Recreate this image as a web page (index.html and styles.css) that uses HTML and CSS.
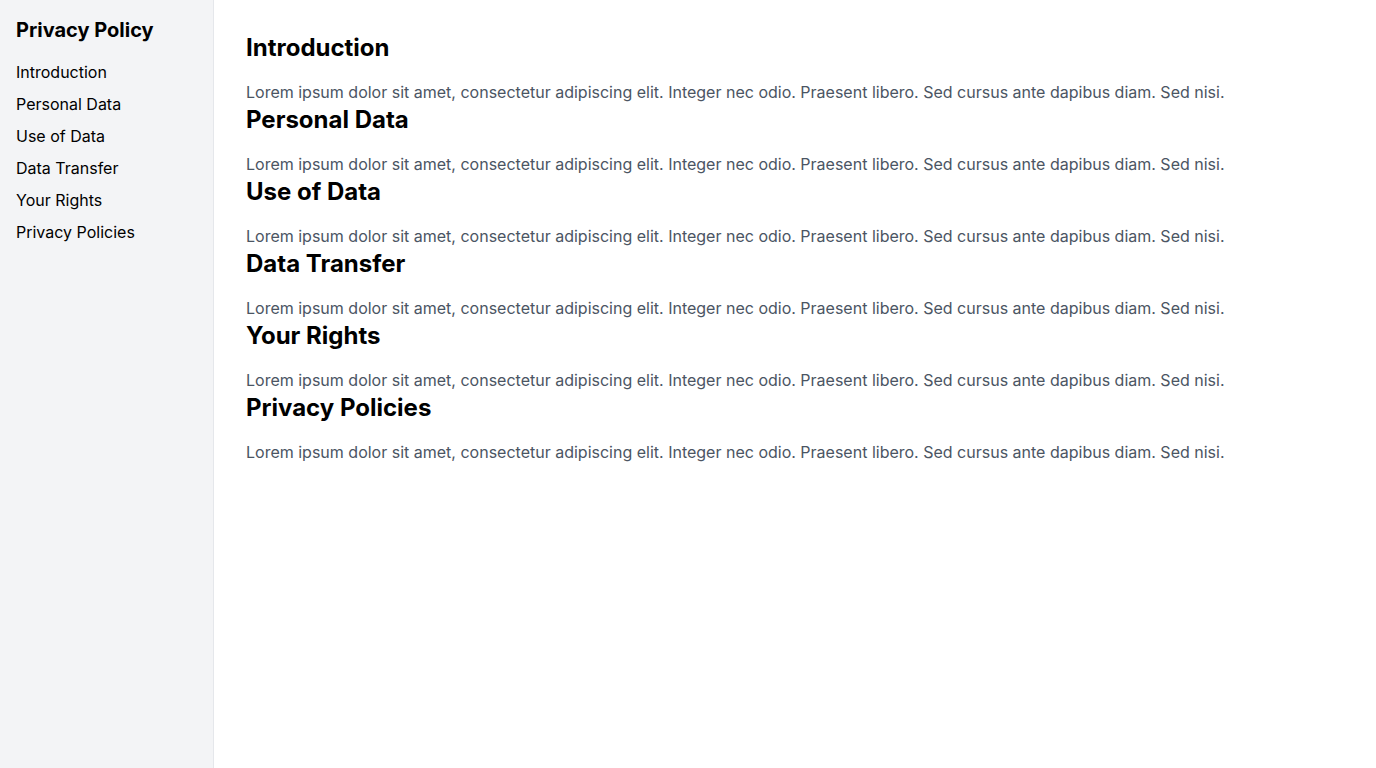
FILE: index.html
```html
<!DOCTYPE html>
<html lang="en">
<head>
<meta charset="utf-8">
<title>Privacy Policy</title>
<link rel="stylesheet" href="styles.css">
</head>
<body>
<div class="layout">
  <aside class="sidebar">
    <h1 class="sidebar-title">Privacy Policy</h1>
    <nav class="nav">
      <a href="#introduction">Introduction</a>
      <a href="#personal-data">Personal Data</a>
      <a href="#use-of-data">Use of Data</a>
      <a href="#data-transfer">Data Transfer</a>
      <a href="#your-rights">Your Rights</a>
      <a href="#privacy-policies">Privacy Policies</a>
    </nav>
  </aside>
  <main class="content">
    <section id="introduction">
      <h2>Introduction</h2>
      <p>Lorem ipsum dolor sit amet, consectetur adipiscing elit. Integer nec odio. Praesent libero. Sed cursus ante dapibus diam. Sed nisi.</p>
    </section>
    <section id="personal-data">
      <h2>Personal Data</h2>
      <p>Lorem ipsum dolor sit amet, consectetur adipiscing elit. Integer nec odio. Praesent libero. Sed cursus ante dapibus diam. Sed nisi.</p>
    </section>
    <section id="use-of-data">
      <h2>Use of Data</h2>
      <p>Lorem ipsum dolor sit amet, consectetur adipiscing elit. Integer nec odio. Praesent libero. Sed cursus ante dapibus diam. Sed nisi.</p>
    </section>
    <section id="data-transfer">
      <h2>Data Transfer</h2>
      <p>Lorem ipsum dolor sit amet, consectetur adipiscing elit. Integer nec odio. Praesent libero. Sed cursus ante dapibus diam. Sed nisi.</p>
    </section>
    <section id="your-rights">
      <h2>Your Rights</h2>
      <p>Lorem ipsum dolor sit amet, consectetur adipiscing elit. Integer nec odio. Praesent libero. Sed cursus ante dapibus diam. Sed nisi.</p>
    </section>
    <section id="privacy-policies">
      <h2>Privacy Policies</h2>
      <p>Lorem ipsum dolor sit amet, consectetur adipiscing elit. Integer nec odio. Praesent libero. Sed cursus ante dapibus diam. Sed nisi.</p>
    </section>
  </main>
</div>
</body>
</html>
```
FILE: styles.css
```css
* { box-sizing: border-box; }
html, body { margin: 0; padding: 0; }
body {
  font-family: Inter, "Noto Sans", sans-serif;
  color: #000;
  background: #fff;
}
.layout {
  display: flex;
  min-height: 100vh;
}
.sidebar {
  width: 214px;
  flex-shrink: 0;
  background: #f3f4f6;
  border-right: 1px solid #e5e7eb;
  padding: 16px;
}
.sidebar-title {
  margin: 0 0 16px;
  font-size: 20px;
  line-height: 28px;
  font-weight: 700;
}
.nav {
  display: flex;
  flex-direction: column;
  gap: 8px;
}
.nav a {
  color: #000;
  text-decoration: none;
  font-size: 16px;
  line-height: 24px;
}
.content {
  flex: 1;
  padding: 32px;
}
.content h2 {
  margin: 0 0 16px;
  font-size: 24px;
  line-height: 32px;
  font-weight: 700;
}
.content p {
  margin: 0;
  font-size: 16px;
  line-height: 24px;
  color: #4b5563;
}
```
